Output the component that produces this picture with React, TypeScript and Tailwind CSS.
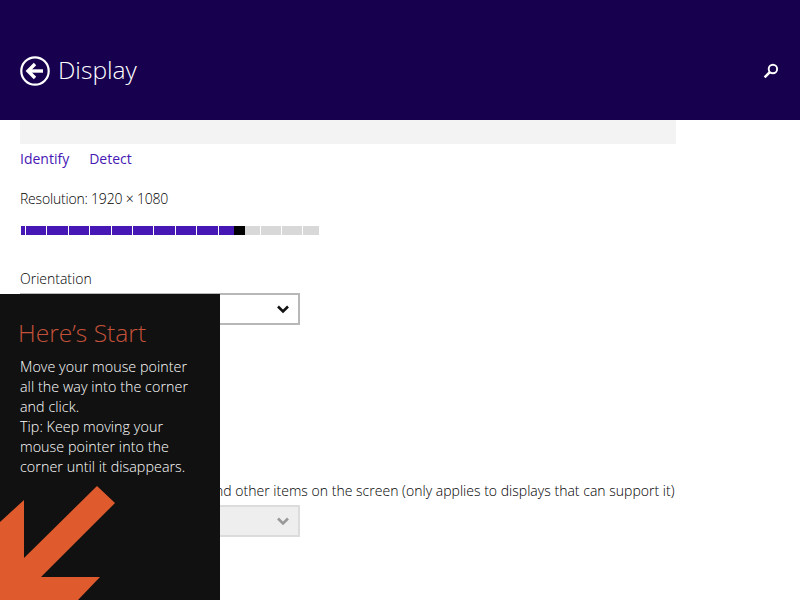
const purple = [
  "w-[4px] ml-0",
  "w-[20px] ml-[1px]",
  "w-[21px] ml-[1px]",
  "w-[20px] ml-[1px]",
  "w-[21px] ml-[1px]",
  "w-[20px] ml-[1px]",
  "w-[20px] ml-[1px]",
  "w-[21px] ml-[1px]",
  "w-[20px] ml-[1px]",
  "w-[21px] ml-[1px]",
  "w-[15px] ml-[1px]",
];
const gray = ["w-[15px] ml-0", "w-[20px] ml-[1px]", "w-[20px] ml-[1px]", "w-[16px] ml-[1px]"];

function Chevron({ color }: { color: string }) {
  return (
    <svg width="14" height="10" viewBox="0 0 14 10" fill="none">
      <path d="M2 2.5 L7 7.5 L12 2.5" stroke={color} strokeWidth="2.6" />
    </svg>
  );
}

export default function App() {
  return (
    <div className="relative w-[800px] h-[600px] overflow-hidden bg-white font-['Open_Sans','Noto_Sans',sans-serif] font-light text-[14px] text-black">
      <header className="h-[120px] bg-[#17004e] flex items-center justify-between pl-[20px] pr-[21px] pt-[22px] text-white">
        <div className="flex items-center gap-[8px]">
          <svg width="30" height="30" viewBox="0 0 30 30" fill="none">
            <circle cx="15" cy="15" r="13.7" stroke="white" strokeWidth="2.2" />
            <path d="M8 15 H23" stroke="white" strokeWidth="3.4" />
            <path d="M15 8 L8 15 L15 22" stroke="white" strokeWidth="3.4" />
          </svg>
          <h1 className="text-[24.6px] leading-[30px] font-light -translate-y-[1px]">Display</h1>
        </div>
        <svg width="16" height="16" viewBox="0 0 16 16" fill="none">
          <circle cx="9.9" cy="6" r="4.2" stroke="white" strokeWidth="1.9" />
          <path d="M6.8 9.2 L1.6 14.4" stroke="white" strokeWidth="2.6" />
        </svg>
      </header>

      <main className="pl-[20px]">
        <div className="h-[24px] w-[656px] bg-[#f3f3f3]" />
        <div className="flex gap-[20px] mt-[5px] font-normal text-[14px] text-[#4617b4] leading-[20px]">
          <span>Identify</span>
          <span>Detect</span>
        </div>
        <p className="mt-[20px] tracking-[-0.2px] leading-[20px]">Resolution: 1920 × 1080</p>
        <div className="flex mt-[17px] ml-[1px] h-[9px]">
          {purple.map((c, i) => (
            <div key={i} className={`${c} bg-[#4617b4]`} />
          ))}
          <div className="w-[11px] bg-black" />
          {gray.map((c, i) => (
            <div key={i} className={`${c} bg-[#d8d8d8]`} />
          ))}
        </div>
        <p className="mt-[34px] leading-[20px]">Orientation</p>
        <div className="mt-[4px] w-[280px] h-[32px] border-2 border-[#b8b8b8] flex items-center justify-end pr-[8px]">
          <Chevron color="#111" />
        </div>
        <p className="mt-[156px] tracking-[0.02px] leading-[20px] whitespace-nowrap">
          Change the size of apps, text, and other items on the screen (only applies to displays that can support it)
        </p>
        <div className="mt-[4px] w-[280px] h-[32px] bg-[#eeeeee] border-2 border-[#dcdcdc] flex items-center justify-end pr-[8px]">
          <Chevron color="#999" />
        </div>
      </main>

      <aside className="absolute left-0 bottom-0 w-[220px] h-[306px] bg-[#111111] pl-[20px] pt-[22px] text-white overflow-hidden">
        <h2 className="-ml-[2px] text-[24.6px] leading-[34px] font-light text-[#c4523a]">Here’s Start</h2>
        <p className="mt-[7px] text-[14.3px] tracking-[0.05px] leading-[20px]">
          Move your mouse pointer
          <br />
          all the way into the corner
          <br />
          and click.
          <br />
          Tip: Keep moving your
          <br />
          mouse pointer into the
          <br />
          corner until it disappears.
        </p>
        <svg className="absolute left-0 bottom-0" width="116" height="114" viewBox="0 0 116 114">
          <path d="M97 0 L115 17 L41 91 L100 91 L78 114 L0 114 L0 36 L24 14 L24 72 Z" fill="#df5a2c" />
        </svg>
      </aside>
    </div>
  );
}
